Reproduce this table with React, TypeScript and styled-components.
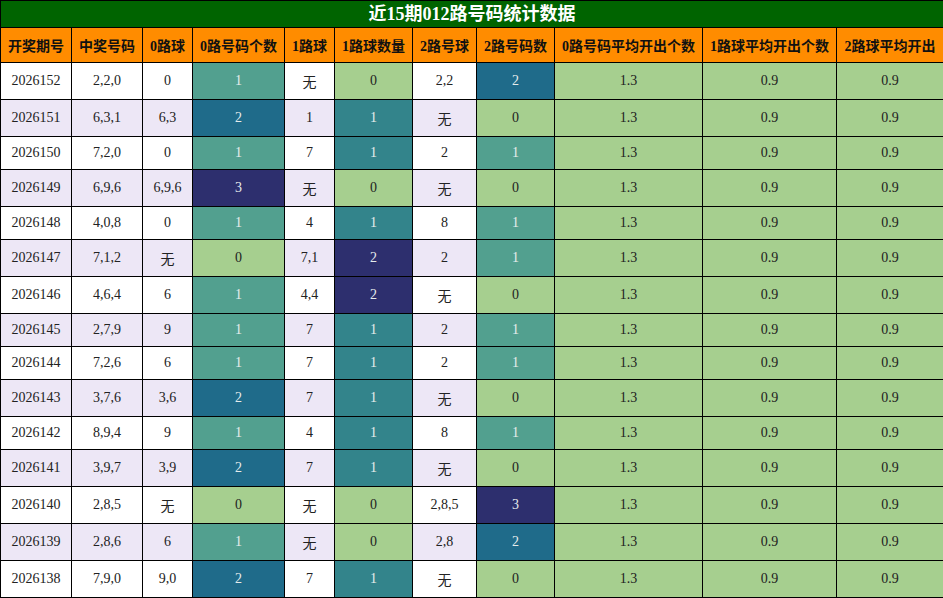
import React from 'react'
import styled, { createGlobalStyle } from 'styled-components'

const GlobalStyle = createGlobalStyle`
  body {
    margin: 0;
    background: #fff;
    font-family: 'Liberation Serif', 'Noto Sans CJK SC', serif;
  }
`

const Table = styled.table`
  width: 943px;
  table-layout: fixed;
  border-collapse: collapse;
  font-family: 'Liberation Serif', 'Noto Sans CJK SC', serif;
`

const Title = styled.th`
  background: #006400;
  color: #fff;
  font-size: 18px;
  font-weight: bold;
  padding: 0;
  height: 26px;
  border: 1px solid #000;
  line-height: 25px;
`

const HeadCell = styled.th`
  background: #ff8c00;
  color: #111;
  font-size: 14px;
  font-weight: bold;
  padding: 7px 0;
  border: 1px solid #000;
  white-space: nowrap;
  overflow: hidden;
`

const Row = styled.tr<{ $alt: boolean }>`
  background: ${({ $alt }) => ($alt ? '#ede7f6' : '#fff')};
`

const Cell = styled.td<{ $bg?: string; $light?: boolean }>`
  background: ${({ $bg }) => $bg || 'transparent'};
  color: ${({ $light }) => ($light ? '#e6ecec' : '#222')};
  font-size: 14px;
  text-align: center;
  padding: 8px 0;
  border: 1px solid #000;
  white-space: nowrap;
`

const GREEN = '#a6cf8f'

const palette = (v: number, oneCol: boolean) => {
  if (v === 0) return GREEN
  if (v === 1) return oneCol ? '#33848b' : '#52a08f'
  if (v === 2) return oneCol ? '#2d2f6e' : '#1f6b8a'
  return '#2d2f6e'
}

const widths = [71, 71, 50, 92, 50, 78, 64, 78, 148, 134, 107]

const headers = [
  '开奖期号',
  '中奖号码',
  '0路球',
  '0路号码个数',
  '1路球',
  '1路球数量',
  '2路号球',
  '2路号码数',
  '0路号码平均开出个数',
  '1路球平均开出个数',
  '2路球平均开出',
]

type Draw = [string, string, string, number, string, number, string, number]

const draws: Draw[] = [
  ['2026152', '2,2,0', '0', 1, '无', 0, '2,2', 2],
  ['2026151', '6,3,1', '6,3', 2, '1', 1, '无', 0],
  ['2026150', '7,2,0', '0', 1, '7', 1, '2', 1],
  ['2026149', '6,9,6', '6,9,6', 3, '无', 0, '无', 0],
  ['2026148', '4,0,8', '0', 1, '4', 1, '8', 1],
  ['2026147', '7,1,2', '无', 0, '7,1', 2, '2', 1],
  ['2026146', '4,6,4', '6', 1, '4,4', 2, '无', 0],
  ['2026145', '2,7,9', '9', 1, '7', 1, '2', 1],
  ['2026144', '7,2,6', '6', 1, '7', 1, '2', 1],
  ['2026143', '3,7,6', '3,6', 2, '7', 1, '无', 0],
  ['2026142', '8,9,4', '9', 1, '4', 1, '8', 1],
  ['2026141', '3,9,7', '3,9', 2, '7', 1, '无', 0],
  ['2026140', '2,8,5', '无', 0, '无', 0, '2,8,5', 3],
  ['2026139', '2,8,6', '6', 1, '无', 0, '2,8', 2],
  ['2026138', '7,9,0', '9,0', 2, '7', 1, '无', 0],
]

const CountCell = ({ value, oneCol }: { value: number; oneCol?: boolean }) => (
  <Cell $bg={palette(value, !!oneCol)} $light={value > 0}>
    {value}
  </Cell>
)

export default function App() {
  return (
    <>
      <GlobalStyle />
      <Table>
        <colgroup>
          {widths.map((w, i) => (
            <col key={i} style={{ width: w }} />
          ))}
        </colgroup>
        <thead>
          <tr>
            <Title colSpan={11}>近15期012路号码统计数据</Title>
          </tr>
          <tr>
            {headers.map((h) => (
              <HeadCell key={h}>{h}</HeadCell>
            ))}
          </tr>
        </thead>
        <tbody>
          {draws.map((d, i) => (
            <Row key={d[0]} $alt={i % 2 === 1}>
              <Cell>{d[0]}</Cell>
              <Cell>{d[1]}</Cell>
              <Cell>{d[2]}</Cell>
              <CountCell value={d[3]} />
              <Cell>{d[4]}</Cell>
              <CountCell value={d[5]} oneCol />
              <Cell>{d[6]}</Cell>
              <CountCell value={d[7]} />
              <Cell $bg={GREEN}>1.3</Cell>
              <Cell $bg={GREEN}>0.9</Cell>
              <Cell $bg={GREEN}>0.9</Cell>
            </Row>
          ))}
        </tbody>
      </Table>
    </>
  )
}
